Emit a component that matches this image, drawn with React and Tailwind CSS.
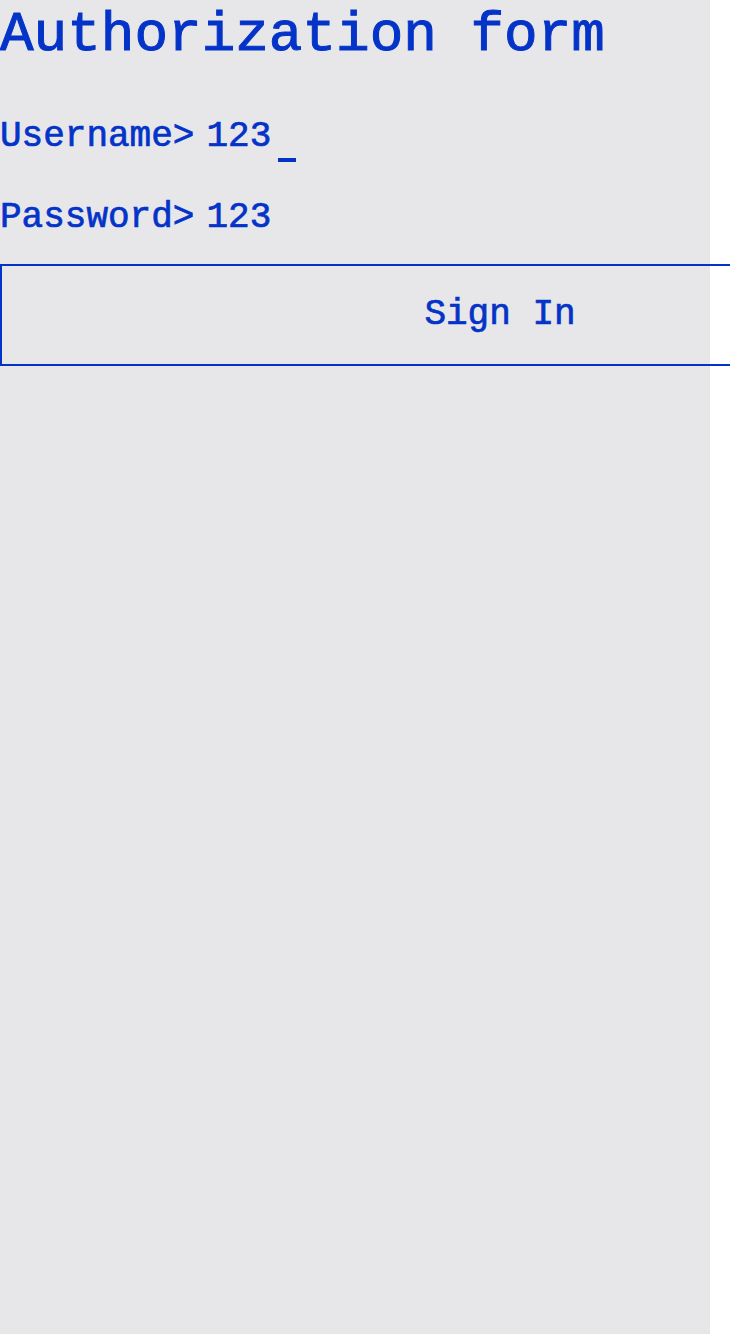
import { useState } from 'react'

const mono = { fontFamily: '"Liberation Mono", "DejaVu Sans Mono", monospace' }

// ── Champ de saisie façon terminal ───────────────────────────────────────────
function Field({ label, value, cursor, className }) {
  return (
    <div className={`flex items-start h-[40px] text-[36px] leading-[40px] [-webkit-text-stroke:0.7px_#0433c8] ${className || ''}`}>
      <span>{label}</span>
      <span className="ml-[12px]">{value}</span>
      {cursor && <span className="w-[18px] h-[4px] bg-[#0433c8] mt-[41px] ml-[7px]" />}
    </div>
  )
}

export default function App() {
  const [user] = useState('123')
  const [pass] = useState('123')

  return (
    <div className="min-h-screen bg-white" style={mono}>
      <div className="w-[710px] min-h-[1334px] bg-[#e7e7ea] text-[#0433c8] pt-[5px]">
        <h1 className="text-[56px] leading-[60px] h-[60px] font-normal whitespace-nowrap [-webkit-text-stroke:1px_#0433c8]">
          Authorization form
        </h1>
        <Field label="Username>" value={user} cursor className="mt-[52px]" />
        <Field label="Password>" value={pass} className="mt-[41px]" />
        <button className="mt-[26px] w-[1000px] h-[102px] border-2 border-[#0433c8] bg-transparent text-[36px] leading-[40px] text-[#0433c8] flex items-center justify-center [-webkit-text-stroke:0.7px_#0433c8]">
          Sign In
        </button>
      </div>
    </div>
  )
}
